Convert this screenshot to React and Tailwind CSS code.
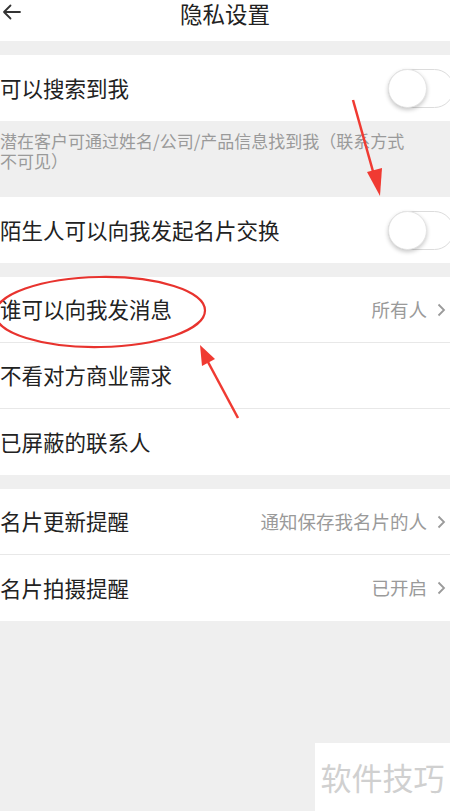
import React from "react";

const font = { fontFamily: '"Noto Sans CJK SC", "Noto Sans", sans-serif' };

function Chevron() {
  return (
    <svg width="9" height="14" viewBox="0 0 9 14" className="ml-[10px]">
      <polyline points="1.5,1.5 7,7 1.5,12.5" fill="none" stroke="#9a9a9a" strokeWidth="1.8" />
    </svg>
  );
}

function Toggle() {
  return (
    <div className="relative mr-[-8px] h-[39px] w-[66px] rounded-full border border-[#dcdcdc] bg-white">
      <div className="absolute left-[-1px] top-[-1px] h-[39px] w-[39px] rounded-full border border-[#e4e4e4] bg-white shadow-[0_2px_4px_rgba(0,0,0,0.22)]" />
    </div>
  );
}

function Row({ label, value, toggle, divider }) {
  return (
    <div className={"flex h-[66px] items-center justify-between bg-white pr-[4px] " + (divider ? "border-b border-[#e8e8e8]" : "")}>
      <span className="text-[21.5px] text-[#222]">{label}</span>
      {toggle ? (
        <Toggle />
      ) : value ? (
        <span className="flex items-center text-[18.5px] text-[#9a9a9a]">
          {value}
          <Chevron />
        </span>
      ) : null}
    </div>
  );
}

export default function App() {
  return (
    <div className="relative h-[811px] w-[450px] overflow-hidden bg-[#efefef]" style={font}>
      <div className="relative flex h-[41px] items-start justify-center bg-white">
        <svg width="20" height="16" viewBox="0 0 20 16" className="absolute left-[2px] top-[4px]">
          <path d="M18 8H2M8.5 1.5L2 8l6.5 6.5" fill="none" stroke="#333" strokeWidth="1.8" strokeLinecap="round" strokeLinejoin="round" />
        </svg>
        <span className="text-[22.5px] leading-[26px] text-[#222]">隐私设置</span>
      </div>

      <div className="mt-[14px]">
        <Row label="可以搜索到我" toggle />
      </div>
      <div className="h-[76px] pt-[10px] text-[17px] leading-[20px] text-[#9a9a9a]">
        潜在客户可通过姓名/公司/产品信息找到我（联系方式
        <br />
        不可见）
      </div>
      <Row label="陌生人可以向我发起名片交换" toggle />

      <div className="mt-[14px]">
        <Row label="谁可以向我发消息" value="所有人" divider />
        <Row label="不看对方商业需求" divider />
        <Row label="已屏蔽的联系人" />
      </div>

      <div className="mt-[14px]">
        <Row label="名片更新提醒" value="通知保存我名片的人" divider />
        <Row label="名片拍摄提醒" value="已开启" />
      </div>

      <svg className="pointer-events-none absolute left-0 top-0" width="450" height="811" viewBox="0 0 450 811">
        <ellipse cx="100" cy="312" rx="105" ry="35" fill="none" stroke="#e8332e" strokeWidth="2.2" transform="rotate(-1 100 312)" />
        <line x1="353" y1="100" x2="374" y2="175" stroke="#f03a32" strokeWidth="2.5" />
        <polygon points="367,172 382,168 380,196" fill="#f03a32" />
        <line x1="238" y1="418" x2="208" y2="362" stroke="#f03a32" strokeWidth="2.5" />
        <polygon points="200,345 215,359 202,366" fill="#f03a32" />
      </svg>

      <div className="absolute bottom-0 right-0 flex h-[68px] w-[135px] items-center justify-center bg-white">
        <span className="text-[31px] text-[#d0d0d0]">软件技巧</span>
      </div>
    </div>
  );
}
